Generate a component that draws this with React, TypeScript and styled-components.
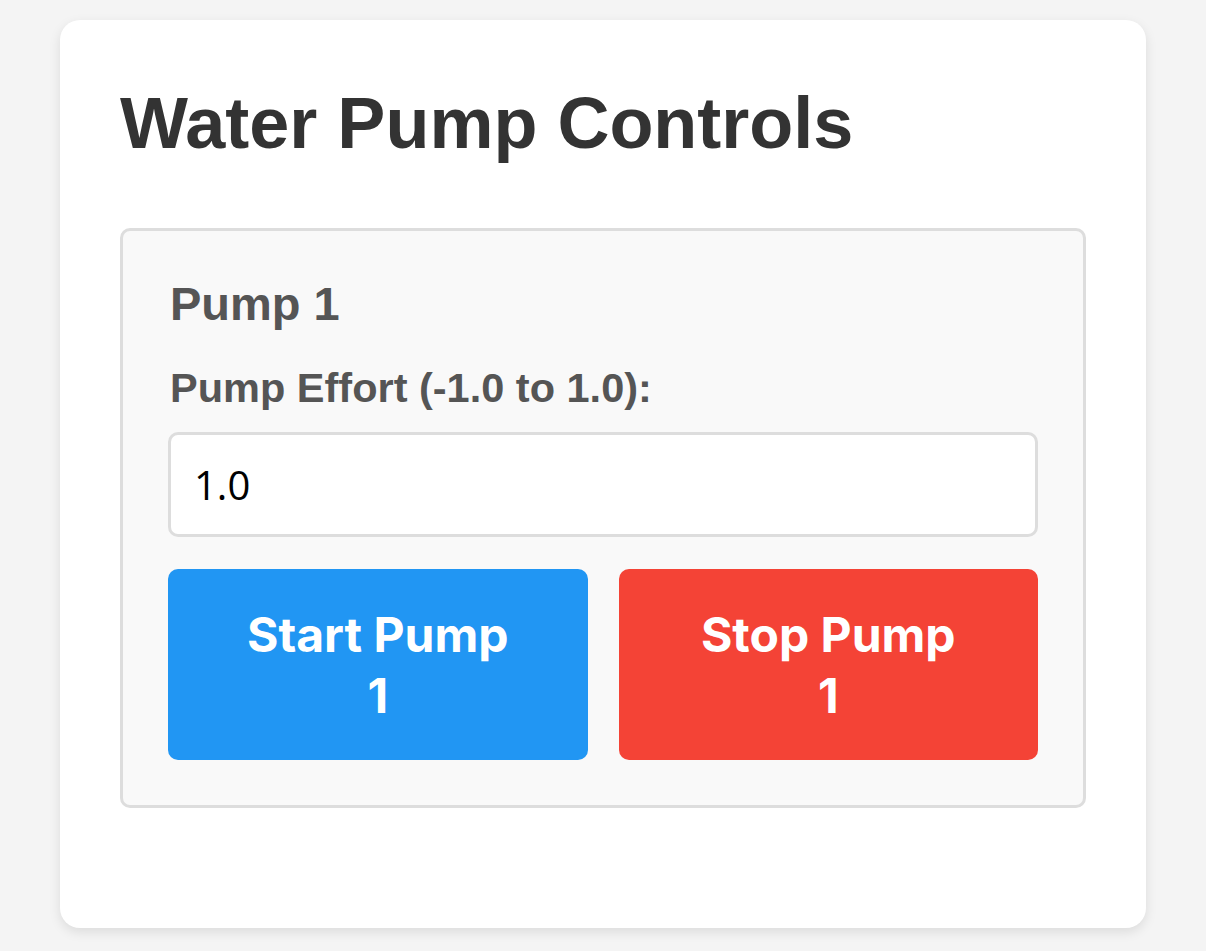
import styled, { createGlobalStyle } from 'styled-components'

const GlobalStyle = createGlobalStyle`
    body {
        margin: 0;
        background: #f4f4f4;
        font-family: "Liberation Sans", Arial, sans-serif;
    }
`

export default function App() {
    return (
        <>
            <GlobalStyle />
            <Card>
                <Title>Water Pump Controls</Title>
                <PumpPanel>
                    <PumpName>Pump 1</PumpName>
                    <Label htmlFor="effort-1">Pump Effort (-1.0 to 1.0):</Label>
                    <EffortInput id="effort-1" type="text" defaultValue="1.0" />
                    <Buttons>
                        <PumpButton $color="#2196f3">Start Pump 1</PumpButton>
                        <PumpButton $color="#f44336">Stop Pump 1</PumpButton>
                    </Buttons>
                </PumpPanel>
            </Card>
        </>
    )
}

const Card = styled.div`
    margin: 20px 60px;
    padding: 63px 60px 120px;
    background: #fff;
    border-radius: 20px;
    box-shadow: 0 4px 12px rgba(0, 0, 0, 0.1);
`

const Title = styled.h1`
    margin: 0 0 65px;
    font-size: 72px;
    line-height: 80px;
    font-weight: bold;
    color: #333;
`

const PumpPanel = styled.div`
    display: flex;
    flex-direction: column;
    padding: 46.5px 45px 45px;
    background: #f9f9f9;
    border: 3px solid #ddd;
    border-radius: 10px;
`

const PumpName = styled.h3`
    margin: 0 0 35px 2px;
    font-size: 47px;
    line-height: 52.5px;
    font-weight: bold;
    color: #555;
`

const Label = styled.label`
    margin: 0 0 20.6px 2px;
    font-size: 41.5px;
    line-height: 46.4px;
    font-weight: bold;
    color: #555;
`

const EffortInput = styled.input`
    box-sizing: border-box;
    height: 105px;
    margin-bottom: 32px;
    padding: 0 23px;
    font-family: "Open Sans", "Noto Sans", sans-serif;
    font-size: 40px;
    color: #000;
    background: #fff;
    border: 3px solid #ddd;
    border-radius: 10px;
    outline: none;
`

const Buttons = styled.div`
    display: grid;
    grid-template-columns: 1fr 1fr;
    gap: 31px;
`

const PumpButton = styled.button<{ $color: string }>`
    height: 191px;
    padding: 0 70px;
    font-family: Inter, "Noto Sans", sans-serif;
    font-size: 48px;
    line-height: 61px;
    font-weight: 700;
    color: #fff;
    background: ${p => p.$color};
    border: none;
    border-radius: 10px;
    cursor: pointer;
`
